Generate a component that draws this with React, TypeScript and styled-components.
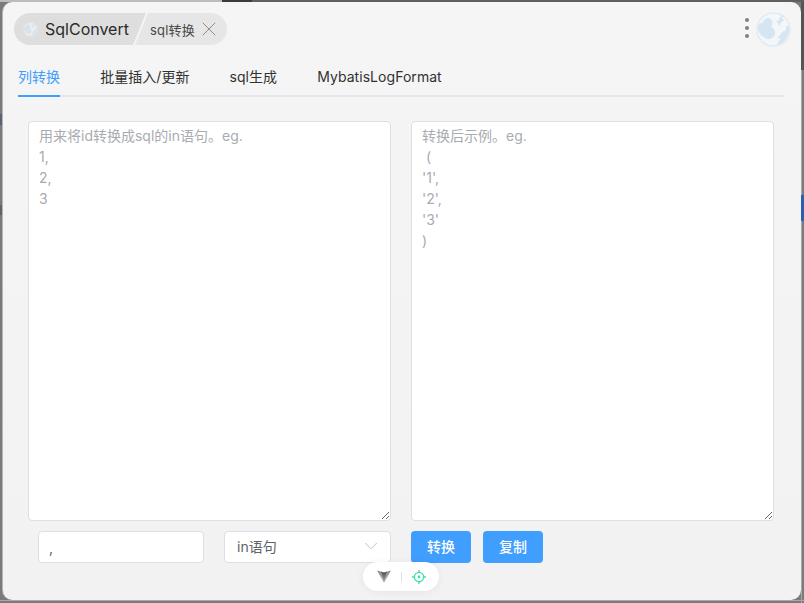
import styled, { createGlobalStyle } from "styled-components";
import { ChevronDown, X } from "lucide-react";

const FONT = `"Inter", "Noto Sans CJK SC", sans-serif`;

const GlobalStyle = createGlobalStyle`
  html, body {
    margin: 0;
    padding: 0;
    width: 804px;
    height: 603px;
    overflow: hidden;
  }
  body {
    font-family: ${FONT};
    background-color: #7b7b7b;
    background-repeat: no-repeat;
    /* strips of the desktop that show round the window */
    background-image:
      linear-gradient(#2a5fb0, #2a5fb0),
      linear-gradient(#5a636e, #5a636e),
      linear-gradient(#5c656f, #5c656f),
      linear-gradient(#3a3a3a, #3a3a3a),
      linear-gradient(#bcbcbc, #bcbcbc),
      linear-gradient(#5f5f5f, #5f5f5f),
      linear-gradient(#555, #555),
      linear-gradient(#a8a8a8, #a8a8a8),
      linear-gradient(#a9a9a9, #a9a9a9);
    background-size:
      3px 26px,
      2px 11px,
      2px 10px,
      30px 2px,
      222px 2px,
      804px 2px,
      3px 70px,
      1px 533px,
      804px 1px;
    background-position:
      801px 195px,
      0 114px,
      0 205px,
      222px 0,
      0 0,
      0 0,
      801px 0,
      801px 70px,
      0 600px;
  }
  * {
    box-sizing: border-box;
  }
`;

const Desktop = styled.div`
  width: 804px;
  height: 603px;
  padding: 2px 3px 3px 2px;
`;

const Window = styled.div`
  position: relative;
  display: flex;
  flex-direction: column;
  height: 100%;
  padding: 10px 17px 0 15px;
  background: linear-gradient(180deg, #f5f5f5 0, #f2f2f2 100%);
  border-left: 1px solid #b4b4b4;
  border-radius: 10px;
`;

const Header = styled.div`
  display: flex;
  justify-content: space-between;
  align-items: center;
  height: 34px;
  margin-left: -4px;
  margin-right: -17px;
`;

const Crumbs = styled.div`
  display: flex;
  align-items: center;
  height: 32px;
`;

const RootCrumb = styled.div`
  display: flex;
  align-items: center;
  gap: 7px;
  width: 132px;
  height: 100%;
  padding-left: 9px;
  font-size: 16px;
  color: #2b2b2b;
  background: #dedede;
  border-radius: 16px 0 0 16px;
  clip-path: polygon(0 0, 100% 0, calc(100% - 13px) 100%, 0 100%);
`;

const PageCrumb = styled.div`
  display: flex;
  align-items: center;
  width: 92px;
  height: 100%;
  margin-left: -11px;
  padding-left: 15px;
  font-size: 13px;
  letter-spacing: 0.2px;
  color: #4a4a4a;
  background: #e6e6e6;
  border-radius: 0 16px 16px 0;
  clip-path: polygon(13px 0, 100% 0, 100% 100%, 0 100%);
`;

const CloseIcon = styled(X)`
  flex: none;
  margin: 0 -6px 0 2px;
  color: #8d8d8d;
`;

const HeaderTools = styled.div`
  display: flex;
  align-items: center;
  gap: 7px;
  margin-right: 10px;
`;

const Dots = styled.div`
  display: flex;
  flex-direction: column;
  gap: 4px;
  margin-top: -2px;
`;

const Dot = styled.span`
  width: 4px;
  height: 4px;
  border-radius: 50%;
  background: #808080;
`;

const TabBar = styled.div`
  display: flex;
  gap: 40px;
  height: 40px;
  margin-top: 11px;
  border-bottom: 2px solid #e4e7ed;
`;

const Tab = styled.div<{ $active?: boolean }>`
  position: relative;
  height: 40px;
  font-size: 14px;
  letter-spacing: 0.05px;
  line-height: 40px;
  color: ${({ $active }) => ($active ? "#409eff" : "#303133")};

  &::after {
    content: "";
    display: ${({ $active }) => ($active ? "block" : "none")};
    position: absolute;
    left: 0;
    right: 0;
    bottom: 0;
    height: 2px;
    background: #409eff;
  }
`;

const Columns = styled.div`
  display: grid;
  grid-template-columns: 363px 363px;
  gap: 20px;
  margin: 24px 0 0 10px;
`;

const Area = styled.textarea`
  display: block;
  width: 100%;
  height: 400px;
  padding: 3px 10px;
  font-family: ${FONT};
  font-size: 14px;
  line-height: 21px;
  background: #fff;
  border: 1px solid #dcdfe6;
  border-radius: 4px;
  outline: none;

  &::placeholder {
    color: #a8abb2;
    opacity: 1;
  }
`;

const Controls = styled.div`
  display: flex;
  align-items: center;
  height: 32px;
  margin-top: 10px;
`;

const LeftControls = styled(Controls)`
  gap: 20px;
  padding-left: 10px;
`;

const RightControls = styled(Controls)`
  gap: 12px;
`;

const Field = styled.input`
  width: 166px;
  height: 32px;
  padding: 0 10px;
  font-family: ${FONT};
  font-size: 14px;
  color: #606266;
  background: #fff;
  border: 1px solid #dcdfe6;
  border-radius: 4px;
  outline: none;
`;

const Select = styled.div`
  display: flex;
  justify-content: space-between;
  align-items: center;
  width: 167px;
  height: 32px;
  padding: 0 8px 2px 12px;
  font-size: 14px;
  color: #606266;
  background: #fff;
  border: 1px solid #dcdfe6;
  border-radius: 4px;
`;

const SelectArrow = styled(ChevronDown)`
  color: #b8bac0;
`;

const Button = styled.button`
  width: 60px;
  height: 32px;
  padding: 0 0 2px;
  font-family: ${FONT};
  font-size: 14px;
  font-weight: 500;
  color: #fff;
  background: #409eff;
  border: none;
  border-radius: 4px;
`;

const DevPill = styled.div`
  position: absolute;
  left: 360px;
  bottom: 9px;
  display: flex;
  align-items: center;
  justify-content: center;
  gap: 10px;
  width: 76px;
  height: 29px;
  background: #fff;
  border-radius: 15px;
  box-shadow: 0 1px 8px rgba(0, 0, 0, 0.06);
`;

const PillDivider = styled.span`
  width: 1px;
  height: 10px;
  background: #e2e2e2;
`;

function GlobeLogo({ size, opacity }: { size: number; opacity: number }) {
  return (
    <svg width={size} height={size} viewBox="0 0 36 36" style={{ opacity }}>
      <circle cx="18" cy="18" r="17" fill="#f4f7fa" stroke="#dbe7f2" strokeWidth="1.2" />
      {/* bird */}
      <path
        d="M3.500 12c1.500-.6 2.700-1 3.700-1.200C8 7.500 10.500 5.800 13 6.200c2.800.5 4.300 3 3.800 5.600-.2 1.200-.8 2-1 2.900 1.600 1.500 3.400 3.500 3.800 5.800.4 2.300-.4 3.800-1.800 5.300-1.600 1.700-3.800 2.400-5.800 2.200C7 26.500 2.300 22 2 17.500c-.1-2 .5-3.800 1.500-5.500z"
        fill="#d6e5f2"
      />
      {/* lightning */}
      <path
        d="M34 15c.8 6-1.500 12-6 15.500-2.200 1.700-4.400 2.600-7 3l4.500-6.500-3.500.6 5.500-7.600 3-.6 1-5.500z"
        fill="#d6e5f2"
      />
      <path d="M20 9l3 .5 1.500-4 3.500-2-1.500 3.700 3 .8-4.500 3.500-.5 3.500-2-3.500z" fill="#d6e5f2" />
    </svg>
  );
}

function ViteMark() {
  return (
    <svg width="14" height="13" viewBox="0 0 14 13">
      <defs>
        <linearGradient id="vite-wing" x1="0" y1="0" x2="0" y2="1">
          <stop offset="0" stopColor="#8a8a8a" />
          <stop offset="1" stopColor="#c0c0c0" />
        </linearGradient>
        <linearGradient id="vite-core" x1="0" y1="0" x2="0" y2="1">
          <stop offset="0" stopColor="#555" />
          <stop offset="1" stopColor="#8f8f8f" />
        </linearGradient>
      </defs>
      <path d="M0 0.500L7 2.500 14 0.500 7 13z" fill="url(#vite-wing)" />
      <path d="M4 1.800L7 2.500 10 1.800 7 11z" fill="url(#vite-core)" />
    </svg>
  );
}

function TargetMark() {
  return (
    <svg width="14" height="14" viewBox="0 0 14 14" fill="none" stroke="#45e0a6">
      <circle cx="7" cy="7" r="4.600" strokeWidth="1.400" />
      <circle cx="7" cy="7" r="1.400" fill="#45e0a6" stroke="none" />
      <path d="M7 0v2.400M7 11.600V14M0 7h2.400M11.600 7H14" strokeWidth="1.400" />
    </svg>
  );
}

const TABS = ["列转换", "批量插入/更新", "sql生成", "MybatisLogFormat"];

export default function App() {
  return (
    <>
      <GlobalStyle />
      <Desktop>
        <Window>
          <Header>
            <Crumbs>
              <RootCrumb>
                <GlobeLogo size={15} opacity={0.55} />
                SqlConvert
              </RootCrumb>
              <PageCrumb>
                sql转换
                <CloseIcon size={24} strokeWidth={1} />
              </PageCrumb>
            </Crumbs>
            <HeaderTools>
              <Dots>
                <Dot />
                <Dot />
                <Dot />
              </Dots>
              <GlobeLogo size={35} opacity={1} />
            </HeaderTools>
          </Header>
          <TabBar>
            {TABS.map((tab, i) => (
              <Tab key={tab} $active={i === 0}>
                {tab}
              </Tab>
            ))}
          </TabBar>
          <Columns>
            <div>
              <Area placeholder={"用来将id转换成sql的in语句。eg.\n1,\n2,\n3"} />
              <LeftControls>
                <Field defaultValue="," />
                <Select>
                  in语句
                  <SelectArrow size={22} strokeWidth={1} />
                </Select>
              </LeftControls>
            </div>
            <div>
              <Area placeholder={"转换后示例。eg.\n (\n'1',\n'2',\n'3'\n)"} />
              <RightControls>
                <Button>转换</Button>
                <Button>复制</Button>
              </RightControls>
            </div>
          </Columns>
          <DevPill>
            <ViteMark />
            <PillDivider />
            <TargetMark />
          </DevPill>
        </Window>
      </Desktop>
    </>
  );
}
